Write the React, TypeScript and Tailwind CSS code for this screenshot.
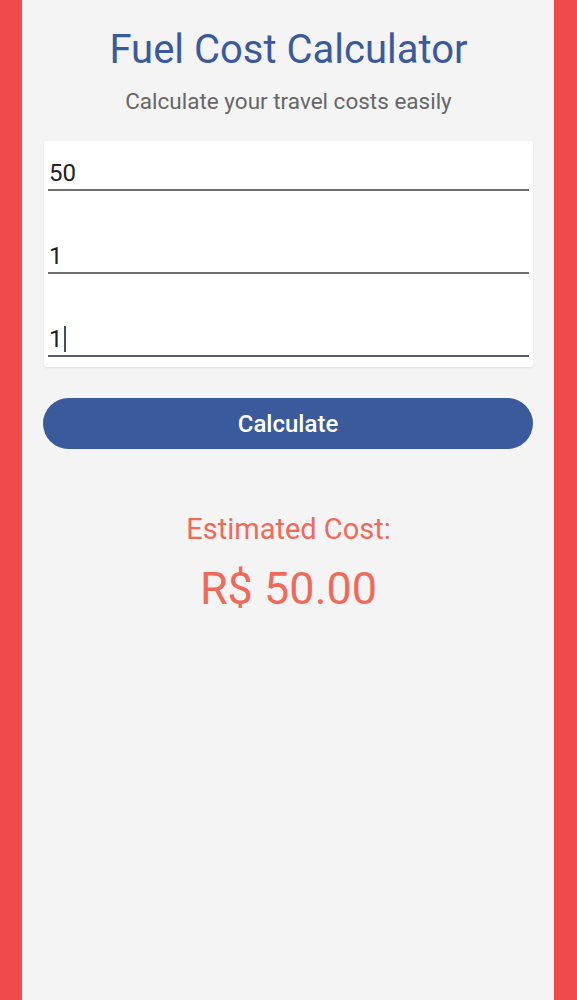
import React from "react";

export default function App() {
  const font = { fontFamily: "Roboto, 'Noto Sans', sans-serif" };
  return (
    <div className="flex min-h-[1000px] w-full bg-[#ef4b4b]" style={font}>
      <div className="ml-[22px] flex w-[532px] flex-col bg-[#f4f4f5] pl-[22px] pr-[21px]">
        <h1 className="mt-[26px] text-center text-[40px] leading-[48px] text-[#3a5a9b]">
          Fuel Cost Calculator
        </h1>
        <p className="mt-[14px] text-center text-[22.5px] leading-[26px] text-[#666]">
          Calculate your travel costs easily
        </p>
        <div className="mt-[27px] flex h-[226px] flex-col rounded-[3px] bg-white px-[4px] pt-[15px] shadow-[0_1px_2px_rgba(0,0,0,0.08)]">
          <div className="flex h-[35px] items-center border-b-[2px] border-[#707070] pl-[1px] text-[24px] leading-none text-[#222]">
            50
          </div>
          <div className="mt-[48px] flex h-[35px] items-center border-b-[2px] border-[#707070] pl-[1px] text-[24px] leading-none text-[#222]">
            1
          </div>
          <div className="mt-[48px] flex h-[35px] items-center border-b-[2px] border-[#555a6e] pl-[1px] text-[24px] leading-none text-[#222]">
            1<span className="ml-[1px] inline-block h-[26px] w-[2px] bg-[#444b66]" />
          </div>
        </div>
        <button className="mt-[31px] h-[51px] w-[490px] -ml-[1px] rounded-full bg-[#3a5a9b] text-[24px] font-medium text-white">
          Calculate
        </button>
        <p className="mt-[64px] text-center text-[29px] leading-[32px] text-[#f06a5a]">
          Estimated Cost:
        </p>
        <p className="mt-[18px] text-center text-[45px] leading-[52px] text-[#f06a5a]">
          R$ 50.00
        </p>
      </div>
    </div>
  );
}
